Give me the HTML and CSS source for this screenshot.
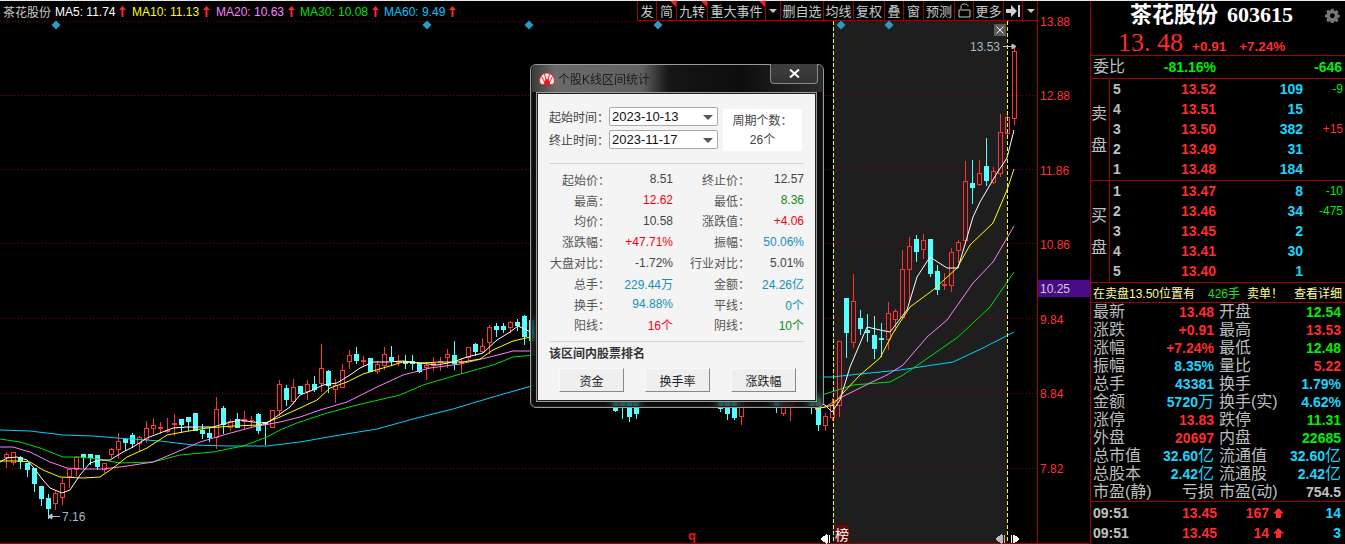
FILE: index.html
```html
<!DOCTYPE html>
<html lang="zh-CN">
<head>
<meta charset="utf-8">
<title>茶花股份 603615</title>
<link rel="stylesheet" href="styles.css">
</head>
<body>
<div class="app">
  <main class="chart">
    <svg id="kline" class="kline" viewBox="0 1 1090 543" width="1090" height="543">
      <rect class="range" x="833" y="21" width="174" height="522"/>
      <g id="grid" class="grid">
        <path d="M0 21.5H1037M0 95.5H1037M0 169.5H1037M0 243.5H1037M0 318.5H1037M0 393.5H1037M0 468.5H1037"/>
      </g>
      <path class="axis" d="M1037.5 1V543M0 543.5H1090"/>
      <g id="candles"></g>
      <g id="lines"></g>
      <path class="marker" d="M833.5 21V543M1007.5 21V543"/>
      <g class="diamonds">
        <path d="M56 20.500l4.500 4.500-4.500 4.500-4.500-4.500z"/><path d="M427 20.500l4.500 4.500-4.500 4.500-4.500-4.500z"/><path d="M529 20.500l4.500 4.500-4.500 4.500-4.500-4.500z"/>
        <path d="M658 20.500l4.500 4.500-4.500 4.500-4.500-4.500z"/><path d="M841 20.500l4.500 4.500-4.500 4.500-4.500-4.500z"/><path d="M889 20.500l4.500 4.500-4.500 4.500-4.500-4.500z"/>
      </g>
      <g class="ticks">
        <text x="1040" y="26">13.88</text><text x="1040" y="100">12.88</text><text x="1040" y="175">11.86</text>
        <text x="1040" y="249">10.86</text><text x="1040" y="324">9.84</text><text x="1040" y="398">8.84</text><text x="1040" y="473">7.82</text>
      </g>
      <rect class="now-box" x="1038" y="280" width="52" height="17"/>
      <text class="now-text" x="1040" y="293">10.25</text>
      <text class="extreme" x="970" y="51">13.53</text>
      <path class="extreme-arrow" d="M1003 46.5H1012M1016 46.5l-4-2.5v5z"/>
      <text class="extreme" x="62" y="521">7.16</text>
      <path class="extreme-arrow" d="M52 516.5H60M48 516.5l4-2.5v5z"/>
      <g class="close-mark">
        <rect x="994" y="24" width="12" height="12"/>
        <path d="M996.5 26.5l7 7M1003.5 26.5l-7 7"/>
      </g>
      <text class="q-mark" x="688" y="540">q</text>
      <rect class="bang-box" x="835" y="525" width="14" height="16"/>
      <text class="bang" x="835" y="540">榜</text>
      <g class="handles">
        <path d="M821 539l5-4v8zM827.5 535v8M829.5 535v8"/>
        <path class="dim" d="M996 539l5-4v8zM1002.5 535v8M1004.5 535v8"/>
        <path d="M1011.5 535v8M1013 535v8M1019 539l-5-4v8z"/>
      </g>
    </svg>

    <header class="topbar">
      <div class="legend">
        <span class="stock">茶花股份</span>
        <span class="ma ma5">MA5: 11.74<svg class="up" viewBox="0 0 7 11" width="7" height="11"><path d="M3.5 0L7 4H4.5V11H2.5V4H0z"/></svg></span>
        <span class="ma ma10">MA10: 11.13<svg class="up" viewBox="0 0 7 11" width="7" height="11"><path d="M3.5 0L7 4H4.5V11H2.5V4H0z"/></svg></span>
        <span class="ma ma20">MA20: 10.63<svg class="up" viewBox="0 0 7 11" width="7" height="11"><path d="M3.5 0L7 4H4.5V11H2.5V4H0z"/></svg></span>
        <span class="ma ma30">MA30: 10.08<svg class="up" viewBox="0 0 7 11" width="7" height="11"><path d="M3.5 0L7 4H4.5V11H2.5V4H0z"/></svg></span>
        <span class="ma ma60">MA60: 9.49<svg class="up" viewBox="0 0 7 11" width="7" height="11"><path d="M3.5 0L7 4H4.5V11H2.5V4H0z"/></svg></span>
      </div>
      <nav class="tools">
        <span>发</span>
        <span class="flag">简</span>
        <span class="flag">九转</span>
        <span class="flag">重大事件</span>
        <span><i class="caret"></i></span>
        <span>删自选</span>
        <span>均线</span>
        <span>复权</span>
        <span>叠</span>
        <span>窗</span>
        <span>预测</span>
        <span><svg viewBox="0 0 13 15" width="13" height="15" class="lock"><path d="M3 6V3.5C3 1.5 4.5 1 6.5 1S10 1.5 10 3.5M1 7h11v7H1z"/></svg></span>
        <span>更多</span>
        <span><svg viewBox="0 0 14 12" width="14" height="12" class="pin"><path d="M0 4H5V0L11 6L5 12V8H0zM12 0H14V12H12z"/></svg></span>
        <span><i class="caret"></i></span>
      </nav>
    </header>

    <section class="dialog">
      <div class="titlebar">
        <svg class="logo" viewBox="0 0 16 14" width="16" height="14">
          <path class="logo-w" d="M0.500 9C0.500 4.500 4 1 8 1C12 1 15.500 4.500 15.500 9C15.500 11 14 12.500 12.500 12.500H3.500C2 12.500 0.500 11 0.500 9z"/>
          <path class="logo-r" d="M2.500 4.500L5.500 10M5.500 2L7 8M10.500 2L9 8M13.500 4.500L10.500 10"/>
          <path class="logo-s" d="M8 6.500C9.500 8.500 11.500 9.500 11 11.500C10.500 12.800 9 12.500 8.500 12L9.500 14H6.500L7.500 12C7 12.500 5.500 12.800 5 11.500C4.500 9.500 6.500 8.500 8 6.500z"/>
        </svg>
        <span class="title">个股K线区间统计</span>
        <button class="close" type="button">
          <svg viewBox="0 0 11 9" width="11" height="9"><path d="M1 0.5L10 8.5M10 0.5L1 8.5"/></svg>
        </button>
      </div>
      <div class="client">
        <div class="range-form">
          <div class="dates">
            <label class="date"><span class="date-l">起始时间<i>：</i></span><span class="select">2023-10-13<b></b></span></label>
            <label class="date"><span class="date-l">终止时间<i>：</i></span><span class="select">2023-11-17<b></b></span></label>
          </div>
          <div class="period"><span>周期个数<i>：</i></span><span>26个</span></div>
        </div>
        <div class="stats">
          <span class="k">起始价<i>：</i></span><span class="v">8.51</span><span class="k">终止价<i>：</i></span><span class="v">12.57</span>
          <span class="k">最高<i>：</i></span><span class="v red">12.62</span><span class="k">最低<i>：</i></span><span class="v green">8.36</span>
          <span class="k">均价<i>：</i></span><span class="v">10.58</span><span class="k">涨跌值<i>：</i></span><span class="v red">+4.06</span>
          <span class="k">涨跌幅<i>：</i></span><span class="v red">+47.71%</span><span class="k">振幅<i>：</i></span><span class="v blue">50.06%</span>
          <span class="k">大盘对比<i>：</i></span><span class="v">-1.72%</span><span class="k">行业对比<i>：</i></span><span class="v">5.01%</span>
          <span class="k">总手<i>：</i></span><span class="v blue">229.44万</span><span class="k">金额<i>：</i></span><span class="v blue">24.26亿</span>
          <span class="k">换手<i>：</i></span><span class="v blue">94.88%</span><span class="k">平线<i>：</i></span><span class="v blue">0个</span>
          <span class="k">阳线<i>：</i></span><span class="v red">16个</span><span class="k">阴线<i>：</i></span><span class="v green">10个</span>
        </div>
        <div class="rank">
          <h2>该区间内股票排名</h2>
          <div class="rank-btns"><button type="button">资金</button><button type="button">换手率</button><button type="button">涨跌幅</button></div>
        </div>
      </div>
    </section>
  </main>

  <aside class="side">
    <div class="head">
      <div class="name"><span class="cn">茶花股份</span><span class="code">603615</span>
        <svg class="gear" viewBox="0 0 16 16" width="15" height="15"><path d="M6.500 0h3l.4 2.200 1.400.6L13.200 1.500l2.300 2.300-1.300 1.900.6 1.400 2.200.4v3l-2.200.4-.6 1.400 1.300 1.900-2.300 2.300-1.900-1.300-1.400.6-.4 2.200h-3l-.4-2.200-1.400-.6-1.900 1.300L.5 13.900l1.300-1.900-.6-1.400L-1 10.200v-3l2.200-.4.6-1.400L.5 3.500 2.800 1.200l1.900 1.300 1.400-.6zM8 5.500a3 3 0 1 0 0 6 3 3 0 0 0 0-6z" transform="translate(.8 .8) scale(.88)"/></svg>
      </div>
      <div class="quote"><span class="last">13. 48</span><span class="chg">+0.91</span><span class="chg">+7.24%</span></div>
    </div>

    <div class="ratio"><span class="lab">委比</span><span class="num g">-81.16%</span><span class="num g">-646</span></div>

    <div class="book">
      <div class="side-tag"><span>卖</span><span>盘</span></div>
      <div class="levels">
        <div class="level"><span class="n">5</span><span class="p">13.52</span><span class="q">109</span><span class="d g">-9</span></div>
        <div class="level"><span class="n">4</span><span class="p">13.51</span><span class="q">15</span><span class="d"></span></div>
        <div class="level"><span class="n">3</span><span class="p">13.50</span><span class="q">382</span><span class="d rd">+15</span></div>
        <div class="level"><span class="n">2</span><span class="p">13.49</span><span class="q">31</span><span class="d"></span></div>
        <div class="level"><span class="n">1</span><span class="p">13.48</span><span class="q">184</span><span class="d"></span></div>
      </div>
    </div>
    <div class="book">
      <div class="side-tag"><span>买</span><span>盘</span></div>
      <div class="levels">
        <div class="level"><span class="n">1</span><span class="p">13.47</span><span class="q">8</span><span class="d g">-10</span></div>
        <div class="level"><span class="n">2</span><span class="p">13.46</span><span class="q">34</span><span class="d g">-475</span></div>
        <div class="level"><span class="n">3</span><span class="p">13.45</span><span class="q">2</span><span class="d"></span></div>
        <div class="level"><span class="n">4</span><span class="p">13.41</span><span class="q">30</span><span class="d"></span></div>
        <div class="level"><span class="n">5</span><span class="p">13.40</span><span class="q">1</span><span class="d"></span></div>
      </div>
    </div>

    <div class="banner"><span class="b1">在卖盘13.50位置有</span><span class="b2">426手</span><span class="b3">卖单！</span><span class="b4">查看详细</span></div>

    <div class="info">
      <span class="lab">最新</span><span class="num rd">13.48</span><span class="lab">开盘</span><span class="num g">12.54</span>
      <span class="lab">涨跌</span><span class="num rd">+0.91</span><span class="lab">最高</span><span class="num rd">13.53</span>
      <span class="lab">涨幅</span><span class="num rd">+7.24%</span><span class="lab">最低</span><span class="num g">12.48</span>
      <span class="lab">振幅</span><span class="num c">8.35%</span><span class="lab">量比</span><span class="num rd">5.22</span>
      <span class="lab">总手</span><span class="num c">43381</span><span class="lab">换手</span><span class="num c">1.79%</span>
      <span class="lab">金额</span><span class="num c">5720<em>万</em></span><span class="lab">换手(实)</span><span class="num c">4.62%</span>
      <span class="lab">涨停</span><span class="num rd">13.83</span><span class="lab">跌停</span><span class="num g">11.31</span>
      <span class="lab">外盘</span><span class="num rd">20697</span><span class="lab">内盘</span><span class="num g">22685</span>
      <span class="lab">总市值</span><span class="num c">32.60<em>亿</em></span><span class="lab">流通值</span><span class="num c">32.60<em>亿</em></span>
      <span class="lab">总股本</span><span class="num c">2.42<em>亿</em></span><span class="lab">流通股</span><span class="num c">2.42<em>亿</em></span>
      <span class="lab">市盈(静)</span><span class="num gy"><em>亏损</em></span><span class="lab">市盈(动)</span><span class="num gy">754.5</span>
    </div>

    <div class="trades">
      <div class="trade"><span class="t">09:51</span><span class="tp">13.45</span><span class="tv">167<svg viewBox="0 0 11 10" width="11" height="10"><path d="M5.500 0L11 5.500H8V10H3V5.500H0z"/></svg></span><span class="tn">14</span></div>
      <div class="trade"><span class="t">09:51</span><span class="tp">13.45</span><span class="tv">14<svg viewBox="0 0 11 10" width="11" height="10"><path d="M5.500 0L11 5.500H8V10H3V5.500H0z"/></svg></span><span class="tn">3</span></div>
    </div>
  </aside>
</div>
<script src="chart.js"></script>
</body>
</html>
```
FILE: styles.css
```css
* { box-sizing: border-box; }
html, body { margin: 0; padding: 0; background: #000; }
body {
  width: 1345px; height: 544px; overflow: hidden;
  font-family: "Liberation Sans", "Noto Sans CJK SC", sans-serif;
  color: #c0c0c0;
}
i, em { font-style: normal; }
.app { display: flex; width: 1345px; height: 544px; border-top: 1px solid #e8e8e8; }

/* chart */
.chart { position: relative; flex: 0 0 1090px; height: 543px; }
.kline { position: absolute; left: 0; top: 0; display: block; }
.range { fill: #1e1e1e; }
.grid path { fill: none; stroke: #800000; stroke-width: 1; stroke-dasharray: 1 2; shape-rendering: crispEdges; }
.axis { fill: none; stroke: #a00000; stroke-width: 1; }
.marker { fill: none; stroke: #ffff00; stroke-width: 1; stroke-dasharray: 4 2; shape-rendering: crispEdges; }
.diamonds path { fill: #2c9ac6; }
.ticks text { fill: #ff3232; font-size: 12px; }
.now-box { fill: #4a0a8a; }
.now-text { fill: #d0d0d0; font-size: 12px; }
.extreme { fill: #a9b6c4; font-size: 12px; }
.extreme-arrow { fill: #c0c0c0; stroke: #c0c0c0; stroke-width: 1; }
.close-mark rect { fill: #5a5a5a; }
.close-mark path { fill: none; stroke: #f0f0f0; stroke-width: 1; }
.q-mark { fill: #e01818; font-size: 13px; font-weight: 700; }
.bang-box { fill: #6a0808; }
.bang { fill: #fff; font-size: 14px; }
.handles path { fill: #fff; stroke: #fff; stroke-width: 1; shape-rendering: crispEdges; }
.handles .dim { fill: #bbb; stroke: #bbb; }
.candle-up { fill: none; stroke: #ff3232; shape-rendering: crispEdges; }
.candle-dn { fill: #54ffff; stroke: #54ffff; shape-rendering: crispEdges; }
.ma-line { fill: none; stroke-width: 1; stroke-linejoin: round; }

.topbar { position: relative; display: flex; justify-content: space-between; height: 20px; }
.legend { display: flex; align-items: center; font-size: 12px; padding-left: 3px; height: 20px; padding-top: 1px; }
.stock { width: 52px; flex: none; color: #c8c8c8; }
.ma { display: flex; align-items: center; gap: 4px; width: 84px; flex: none; white-space: nowrap; }
.ma5 { width: 77px; color: #fff; }
.ma10 { color: #ffff00; }
.ma20 { color: #ff80ff; }
.ma30 { color: #00e000; }
.ma60 { color: #00c8ff; }
.up { fill: #ff2828; flex: none; }

.tools {
  position: absolute; left: 637px; top: 0; width: 401px; height: 20px;
  display: grid;
  grid-template-columns: 19px 20px 31px 58px 15px 43px 30px 31px 19px 20px 31px 19px 30px 19px 16px;
  border: 1px solid #a00000; border-top-width: 0; border-bottom-width: 1px;
  font-size: 13px; color: #c8c8c8; background: #000;
}
.tools > span {
  position: relative; display: flex; align-items: center; justify-content: center;
  border-right: 1px solid #a00000; white-space: nowrap; overflow: hidden;
}
.tools > span:last-child { border-right: 0; }
.flag::after {
  content: ""; position: absolute; right: 0; top: 0; width: 0; height: 0;
  border-top: 6px solid #ff1818; border-left: 6px solid transparent;
}
.caret { display: block; width: 0; height: 0; border-top: 4px solid #c8c8c8; border-left: 4px solid transparent; border-right: 4px solid transparent; }
.lock { fill: none; stroke: #c8c8c8; stroke-width: 1; }
.pin { fill: #d0d0d0; }

/* dialog */
.dialog {
  position: absolute; left: 530px; top: 63px; width: 294px; height: 344px;
  padding: 0 7px 6px 6px; display: flex; flex-direction: column;
  background: rgba(24, 24, 24, .55);
  -webkit-backdrop-filter: blur(5px); backdrop-filter: blur(5px);
  border: 1px solid #9a9a9a; border-radius: 6px;
  box-shadow: inset 0 0 0 1px #222;
}
.titlebar {
  position: relative; display: flex; align-items: center; gap: 3px;
  flex: 0 0 27px; margin: 0 -6px 0 -5px; padding: 0 0 0 7px;
  background: linear-gradient(90deg, #3a3a3a 0, #6a6a6a 8%, #606060 38%, #161616 47%, #0d0d0d 72%, #2c2c2c 100%);
  border-radius: 5px 5px 0 0;
}
.title { font-size: 12px; color: #1d1d1d; }
.logo { flex: none; }
.logo-w { fill: #fde8ea; stroke: #e8262a; stroke-width: 1; }
.logo-r { fill: none; stroke: #e8262a; stroke-width: 1; }
.logo-s { fill: #e01a20; }
.close {
  position: absolute; right: 4px; top: -1px; width: 48px; height: 20px; padding: 0;
  display: flex; align-items: center; justify-content: center;
  background: linear-gradient(#3f3f3f, #333);
  border: 1px solid #8a8a8a; border-top: 0; border-radius: 0 0 4px 4px;
}
.close svg { fill: none; stroke: #fff; stroke-width: 2; }
.client {
  flex: 1; display: flex; flex-direction: column; padding: 13px 11px 0 11px;
  background: #f4f4f4; border: 1px solid #222; outline: 1px solid #999;
  color: #444; font-size: 12px; margin-top: 1px;
}
.client i { font-family: "Noto Sans CJK TC", sans-serif; }
.range-form { display: flex; gap: 5px; height: 57px; border-bottom: 1px solid #d4d4d4; margin-bottom: 5px; flex: none; }
.dates { display: flex; flex-direction: column; gap: 4px; width: 169px; flex: none; }
.date { display: flex; align-items: center; height: 19px; }
.date-l { width: 60px; flex: none; white-space: nowrap; }
.select {
  position: relative; display: flex; align-items: center; width: 109px; height: 19px; padding-left: 2px;
  background: #fff; border: 1px solid #a9a9a9; border-radius: 2px;
  font-size: 13px; color: #111;
}
.select b {
  position: absolute; right: 4px; top: 7px; width: 0; height: 0;
  border-top: 5px solid #555; border-left: 5px solid transparent; border-right: 5px solid transparent;
}
.period {
  width: 79px; height: 42px; margin-top: 2px; background: #fff; border-radius: 2px;
  display: flex; flex-direction: column; align-items: center; justify-content: space-around; padding: 1px 0 3px;
}
.stats {
  display: grid; grid-template-columns: 61px 63px 77px 54px; grid-auto-rows: 20.8px;
  align-items: center; align-content: start; flex: none; height: 173px; border-bottom: 1px solid #d4d4d4;
}
.k { text-align: right; white-space: nowrap; color: #555; }
.v { text-align: right; white-space: nowrap; color: #444; }
.red { color: #f60010; }
.green { color: #128a1a; }
.blue { color: #1a8fb8; }
.rank h2 { margin: 4px 0 6px; font-size: 12px; font-weight: 700; color: #333; line-height: 16px; }
.rank-btns { display: flex; gap: 21px; padding-left: 10px; }
.rank-btns button {
  width: 65px; height: 24px; padding: 0; background: #efefef; color: #222;
  font: 12px "Liberation Sans", "Noto Sans CJK SC", sans-serif;
  border: 1px solid; border-color: #f8f8f8 #888 #888 #f8f8f8;
}

/* right panel */
.side { flex: 0 0 255px; height: 543px; border-left: 1px solid #a00000; display: flex; flex-direction: column; }
.head { flex: 0 0 55px; border-bottom: 1px solid #a00000; }
.name { position: relative; display: flex; align-items: center; gap: 9px; height: 28px; padding-left: 39px; color: #fff; font-weight: 700; }
.cn { font-size: 22px; line-height: 28px; }
.code { font-family: "Liberation Serif", serif; font-size: 22px; }
.gear { position: absolute; right: 5px; top: 7px; fill: #777; }
.quote { display: flex; align-items: baseline; height: 26px; padding-left: 27px; color: #ff2c2c; }
.last { font-family: "Liberation Serif", serif; font-size: 26px; line-height: 28px; white-space: pre; width: 74px; flex: none; }
.chg { font-size: 13.5px; font-weight: 700; margin-right: 13px; }
.lab { font-size: 16px; line-height: 18px; color: #bdbdbd; white-space: nowrap; }
.num { font-size: 14px; font-weight: 700; text-align: right; white-space: nowrap; }
.g { color: #00ee00; }
.rd { color: #ff2c2c; }
.c { color: #19d6ff; }
.gy { color: #c0c0c0; }
.ratio {
  display: grid; grid-template-columns: 60px 63px 126px; align-items: center;
  flex: 0 0 23px; border-bottom: 1px solid #a00000; padding-left: 2px;
}
.book { display: flex; flex: 0 0 102px; border-bottom: 1px solid #a00000; }
.side-tag {
  flex: 0 0 18px; border-right: 1px solid #a00000; display: flex; flex-direction: column; align-items: center;
  justify-content: center; gap: 16px; font-size: 16px; line-height: 16px; color: #c0c0c0; padding-right: 2px;
}
.levels { flex: 1; display: grid; grid-auto-rows: 1fr; padding: 0 0 1px; }
.level {
  display: grid; grid-template-columns: 12px 91px 87px 40px; align-items: center;
  padding-left: 3px; font-size: 14px; font-weight: 700;
}
.n { color: #c0c0c0; }
.p { color: #ff2c2c; text-align: right; }
.q { color: #19d6ff; text-align: right; }
.d { font-size: 12px; font-weight: 400; text-align: right; }
.banner {
  flex: 0 0 20px; display: flex; align-items: center; padding-left: 2px;
  font-size: 12px; border-bottom: 1px solid #a00000; color: #ffff99; white-space: nowrap;
}
.b1 { width: 115px; flex: none; }
.b2 { width: 39px; flex: none; color: #1fe01f; }
.b3 { width: 47px; flex: none; }
.info {
  flex: 0 0 198px; display: grid; grid-template-columns: 56px 70px 56px 66px; grid-auto-rows: 18px;
  align-items: center; padding-left: 2px; border-bottom: 1px solid #a00000;
}
.info .num { line-height: 18px; }
.info .num:nth-child(4n+2) { padding-right: 5px; }
.info em { font-size: 16px; font-weight: 400; }
.trades { flex: 1; display: flex; flex-direction: column; justify-content: space-around; padding: 1px 0; }
.trade {
  display: grid; grid-template-columns: 40px 84px 67px 57px; align-items: center;
  padding-left: 2px; font-size: 14px; font-weight: 700;
}
.t { color: #c0c0c0; }
.tp { color: #ff2c2c; text-align: right; }
.tv { color: #ff2c2c; display: flex; justify-content: flex-end; align-items: center; gap: 4px; }
.tv svg { fill: #ff2c2c; flex: none; }
.tn { color: #19d6ff; text-align: right; }
```
FILE: chart.js
```js
// each candle: [x, high, top, bottom, low, up?]
var U = 1, D = 0;
var candles = [
[6,451,454,457,467,U],[13,452,452,462,464,U],[20,455,457,461,468,D],[27,463,463,469,476,D],[34,468,468,483,491,D],
[41,485,486,498,505,D],[48,493,498,508,518,D],[55,490,493,503,509,U],[62,477,483,497,504,U],[69,469,469,476,487,U],
[76,455,457,469,475,U],[83,454,454,457,467,D],[90,454,454,457,464,D],[97,455,455,466,469,D],[104,462,463,469,472,U],
[111,447,449,454,457,U],[118,432,441,449,458,U],[125,437,439,442,450,D],[132,432,435,443,447,D],[139,435,437,443,450,U],
[146,420,428,439,442,U],[153,417,425,428,433,U],[160,421,427,428,433,U],[167,417,430,431,432,U],[174,413,423,424,435,U],
[181,419,419,424,432,D],[188,417,417,421,430,D],[195,413,413,430,430,D],[202,423,430,433,438,D],[209,427,433,437,441,D],
[216,396,409,437,448,U],[223,405,408,424,433,D],[230,418,421,427,430,U],[237,412,419,427,427,D],[244,410,419,421,428,U],
[251,415,420,420,427,U],[258,412,414,430,433,D],[265,422,422,424,444,D],[272,410,410,427,427,U],[279,379,384,410,415,U],
[286,384,388,399,405,D],[293,378,387,401,403,U],[300,385,386,393,393,D],[307,379,384,391,399,U],[314,375,384,389,391,D],
[321,343,368,383,391,U],[328,369,371,385,392,D],[335,378,385,389,402,U],[342,363,370,387,387,U],[349,349,355,361,368,U],
[356,346,354,360,363,D],[363,355,360,361,365,U],[370,357,358,371,371,D],[377,360,364,371,373,U],[384,346,354,365,369,U],
[391,345,357,360,365,D],[398,354,361,362,365,U],[405,354,361,363,368,D],[412,354,361,363,369,D],[419,362,363,371,372,D],
[426,363,365,367,379,U],[433,356,363,365,370,U],[440,356,361,362,370,U],[447,348,354,357,367,U],[454,340,355,363,369,D],
[461,357,361,362,373,U],[468,346,347,357,361,U],[475,342,344,351,355,D],[482,337,346,351,352,U],[489,324,327,342,353,U],
[496,322,326,329,336,D],[503,322,326,329,332,D],[510,320,322,327,332,U],[517,318,322,325,330,D],[524,314,316,336,344,D],
[531,316,320,340,350,D],
[615,395,395,410,411,D],[622,395,396,405,418,D],[629,395,396,416,421,D],[636,395,396,413,418,D],
[720,395,396,408,411,D],[727,395,396,413,419,D],[734,395,396,417,419,D],[741,395,396,416,424,U],
[776,395,396,407,412,D],[783,395,396,413,415,U],[790,395,396,405,420,U],[811,395,396,405,413,D],
[818,395,398,424,430,D],[825,412,416,425,430,U],[832,397,405,417,420,U],
[839,341,341,405,416,U],[846,298,298,332,357,D],[853,273,301,342,347,U],[860,309,318,328,334,D],[867,313,330,332,341,D],
[874,315,335,348,358,D],[881,322,338,339,356,D],[888,301,313,339,349,U],[895,308,311,319,330,U],[902,249,269,317,318,U],
[909,236,246,269,300,U],[916,234,239,251,261,D],[923,233,240,249,258,U],[930,238,239,273,276,D],[937,264,271,289,294,D],
[944,272,284,285,289,U],[951,247,252,285,291,U],[958,239,242,250,262,U],[965,160,181,240,242,U],[972,159,183,187,203,D],
[979,159,173,184,185,U],[986,137,166,180,185,D],[993,166,171,182,183,U],[1000,113,132,173,176,U],[1007,113,117,133,138,U],
[1014,46,51,118,124,U]
];

var lines = {
  '#00d0ff': ['0,430 30,431 63,435 93,436 117,438 160,441 193,445 227,446 267,446 300,442 340,435 377,429 413,419 453,409 493,397 535,385',
              '815,377 833,377 850,375 900,370 953,362 983,348 1014,332'],
  '#00e000': ['0,439 20,442 40,448 63,457 80,457 97,459 120,463 153,462 180,455 213,452 243,446 267,437 280,430 297,423 327,413 357,405 400,395 423,385 457,375 493,365 513,357 535,355',
              '815,396 825,394 853,385 890,382 903,375 925,360 958,337 990,307 1014,272'],
  '#ff80ff': ['0,447 13,447 30,452 50,462 67,468 83,469 103,469 127,466 153,462 177,452 200,442 227,434 253,427 280,422 300,417 320,410 347,402 377,387 403,375 430,368 460,364 490,357 513,351 535,351',
              '815,409 825,407 840,398 870,383 887,375 903,365 927,337 947,320 973,283 993,262 1014,226'],
  '#ffff00': ['0,461 20,461 30,462 43,470 60,477 83,478 100,477 113,468 127,457 147,448 167,435 183,432 207,428 233,426 260,425 280,417 300,408 317,400 330,388 347,382 363,374 383,368 403,362 420,363 440,362 463,362 480,359 493,350 513,341 535,336',
              '815,409 825,407 833,405 843,393 860,375 880,358 893,333 910,307 933,290 957,268 970,245 993,223 1007,190 1014,169'],
  '#ffffff': ['0,462 7,458 17,457 27,460 33,467 43,480 50,488 62,493 70,490 80,475 90,463 100,460 110,460 123,452 133,447 147,438 160,433 173,428 187,427 200,427 213,427 227,423 240,420 253,422 267,423 280,414 290,407 300,395 313,390 323,385 337,383 350,375 360,368 373,362 387,362 403,361 420,363 437,365 453,362 467,357 483,353 497,340 510,332 518,326 535,334',
              '815,402 825,405 832,412 840,400 850,367 867,327 880,330 890,332 907,310 917,277 930,257 947,268 958,268 973,217 980,202 997,173 1007,158 1014,130']
};

var NS = 'http://www.w3.org/2000/svg';
function el(parent, name, attrs) {
  var node = document.createElementNS(NS, name);
  for (var key in attrs) node.setAttribute(key, attrs[key]);
  parent.appendChild(node);
  return node;
}

var layer = document.getElementById('candles');
candles.forEach(function (c) {
  var cx = c[0] + 0.5, hi = c[1] + 0.5, top = c[2] + 0.5, bot = c[3] + 0.5, lo = c[4] + 0.5;
  var box = 'M' + (cx - 2) + ' ' + top + 'h4V' + bot + 'h-4z';
  var d = c[5]
    ? 'M' + cx + ' ' + hi + 'V' + top + box + 'M' + cx + ' ' + bot + 'V' + lo
    : 'M' + cx + ' ' + hi + 'V' + lo + box;
  el(layer, 'path', { d: d, 'class': c[5] ? 'candle-up' : 'candle-dn' });
});

var lineLayer = document.getElementById('lines');
Object.keys(lines).forEach(function (color) {
  lines[color].forEach(function (pts) {
    el(lineLayer, 'polyline', { points: pts, 'class': 'ma-line', stroke: color });
  });
});
```
